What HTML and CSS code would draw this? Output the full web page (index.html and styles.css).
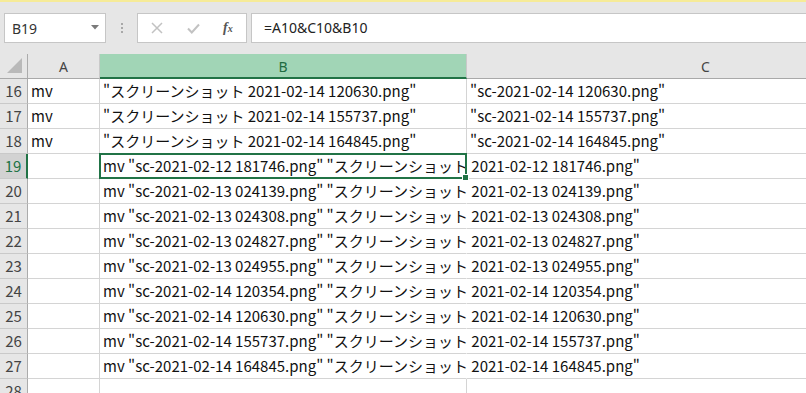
FILE: index.html
```html
<!DOCTYPE html>
<html lang="ja">
<head>
  <meta charset="UTF-8">
  <title>Book1 - Excel</title>
  <link rel="stylesheet" href="styles.css">
</head>
<body>

  <div class="topline"></div>

  <div class="formula-bar">
    <div class="name-box">
      <span>B19</span>
      <svg class="caret" width="8" height="5" viewBox="0 0 8 5"><path d="M0 0H8L4 4.5Z" fill="#7a7a7a"/></svg>
    </div>
    <div class="grip"><i></i><i></i><i></i></div>
    <div class="fx-group">
      <svg class="icon" width="12" height="12" viewBox="0 0 12 12"><path d="M1 1L11 11M11 1L1 11" stroke="#c2c2c2" stroke-width="1.5" fill="none"/></svg>
      <svg class="icon" width="13" height="11" viewBox="0 0 13 11"><path d="M1 5.5L4.8 9.5L12 1.5" stroke="#c2c2c2" stroke-width="2" fill="none"/></svg>
      <span class="fx">f<sub>x</sub></span>
    </div>
    <div class="formula">=A10&amp;C10&amp;B10</div>
  </div>

  <div class="sheet">
    <div class="hd corner"><svg width="17" height="17" viewBox="0 0 17 17"><path d="M16 1V16H1Z" fill="#b9b9b9"/></svg></div>
    <div class="hd">A</div>
    <div class="hd col-sel">B</div>
    <div class="hd">C</div>

    <div class="rh">16</div><div class="c">mv</div><div class="c">"スクリーンショット 2021-02-14 120630.png"</div><div class="c">"sc-2021-02-14 120630.png"</div>
    <div class="rh">17</div><div class="c">mv</div><div class="c">"スクリーンショット 2021-02-14 155737.png"</div><div class="c">"sc-2021-02-14 155737.png"</div>
    <div class="rh">18</div><div class="c">mv</div><div class="c">"スクリーンショット 2021-02-14 164845.png"</div><div class="c">"sc-2021-02-14 164845.png"</div>
    <div class="rh row-sel">19</div><div class="c"></div><div class="c spill active">mv "sc-2021-02-12 181746.png" "スクリーンショット 2021-02-12 181746.png"</div><div class="c"></div>
    <div class="rh">20</div><div class="c"></div><div class="c spill">mv "sc-2021-02-13 024139.png" "スクリーンショット 2021-02-13 024139.png"</div><div class="c"></div>
    <div class="rh">21</div><div class="c"></div><div class="c spill">mv "sc-2021-02-13 024308.png" "スクリーンショット 2021-02-13 024308.png"</div><div class="c"></div>
    <div class="rh">22</div><div class="c"></div><div class="c spill">mv "sc-2021-02-13 024827.png" "スクリーンショット 2021-02-13 024827.png"</div><div class="c"></div>
    <div class="rh">23</div><div class="c"></div><div class="c spill">mv "sc-2021-02-13 024955.png" "スクリーンショット 2021-02-13 024955.png"</div><div class="c"></div>
    <div class="rh">24</div><div class="c"></div><div class="c spill">mv "sc-2021-02-14 120354.png" "スクリーンショット 2021-02-14 120354.png"</div><div class="c"></div>
    <div class="rh">25</div><div class="c"></div><div class="c spill">mv "sc-2021-02-14 120630.png" "スクリーンショット 2021-02-14 120630.png"</div><div class="c"></div>
    <div class="rh">26</div><div class="c"></div><div class="c spill">mv "sc-2021-02-14 155737.png" "スクリーンショット 2021-02-14 155737.png"</div><div class="c"></div>
    <div class="rh">27</div><div class="c"></div><div class="c spill">mv "sc-2021-02-14 164845.png" "スクリーンショット 2021-02-14 164845.png"</div><div class="c"></div>
    <div class="rh">28</div><div class="c"></div><div class="c"></div><div class="c"></div>
  </div>

</body>
</html>
```

FILE: styles.css
```css
body {
  margin: 0;
  width: 806px;
  height: 393px;
  overflow: hidden;
  background: #fff;
  font-family: "Noto Sans CJK JP", "Noto Sans", sans-serif;
  color: #222;
}

.topline {
  height: 2px;
  background: #f6eb98;
}

.formula-bar {
  display: flex;
  align-items: center;
  height: 52px;
  background: #e6e6e6;
  padding-left: 4px;
  box-sizing: border-box;
}

.name-box {
  display: flex;
  align-items: center;
  justify-content: space-between;
  width: 102px;
  height: 30px;
  box-sizing: border-box;
  border: 1px solid #c6c6c6;
  background: #fff;
  padding: 0 6px 0 7px;
  font-family: "Noto Sans", sans-serif;
  font-size: 14px;
  color: #333;
}

.caret {
  margin-top: -2px;
}

.grip {
  display: flex;
  flex-direction: column;
  gap: 2px;
  width: 31px;
  align-items: center;
}

.grip i {
  display: block;
  width: 2px;
  height: 2px;
  background: #a8a8a8;
}

.fx-group {
  display: flex;
  align-items: center;
  width: 110px;
  height: 30px;
  box-sizing: border-box;
  border: 1px solid #c6c6c6;
  background: #fff;
  padding-left: 13px;
}

.fx-group .icon {
  margin-right: 24px;
}

.fx-group .icon + .icon {
  margin-right: 23px;
}

.fx {
  font-family: "Liberation Serif", serif;
  font-style: italic;
  font-weight: bold;
  font-size: 14px;
  color: #555;
}

.fx sub {
  font-size: 10px;
  vertical-align: 0;
}

.formula {
  flex: 1;
  height: 30px;
  box-sizing: border-box;
  border: 1px solid #c6c6c6;
  border-right: none;
  margin-left: 4px;
  background: #fff;
  padding-left: 12px;
  line-height: 28px;
  font-family: "Noto Sans", sans-serif;
  font-size: 14px;
  color: #222;
}

.sheet {
  display: grid;
  grid-template-columns: 28px 72px 367px 478px;
  grid-auto-rows: 25px;
  width: 945px;
  background: #fff;
}

.hd {
  background: #e6e6e6;
  border-right: 1px solid #c9c9c9;
  border-bottom: 1px solid #a9a9a9;
  box-sizing: border-box;
  text-align: center;
  line-height: 25px;
  font-family: "Noto Sans", sans-serif;
  font-size: 14px;
  color: #444;
}

.corner {
  display: flex;
  align-items: flex-end;
  justify-content: flex-end;
  padding: 0 4px 4px 0;
  border-right-color: #ababab;
}

.col-sel {
  background: #a1d5b6;
  color: #1f6c42;
  border-bottom: 2px solid #217346;
}

.rh {
  background: #e6e6e6;
  border-right: 1px solid #ababab;
  border-bottom: 1px solid #c9c9c9;
  box-sizing: border-box;
  text-align: center;
  line-height: 24px;
  font-size: 15px;
  color: #444;
}

.row-sel {
  background: #d2d2d2;
  color: #217346;
  border-right: 2px solid #217346;
}

.c {
  border-right: 1px solid #d4d4d4;
  border-bottom: 1px solid #d4d4d4;
  box-sizing: border-box;
  padding-left: 3px;
  line-height: 24px;
  font-size: 15px;
  color: #111;
  white-space: nowrap;
  overflow: hidden;
}

.spill {
  overflow: visible;
  border-right-color: transparent;
}

.active {
  position: relative;
}

.active::after {
  content: "";
  position: absolute;
  left: -1px;
  top: -1px;
  right: -1px;
  bottom: -1px;
  border: 2px solid #217346;
}

.active::before {
  content: "";
  position: absolute;
  right: -3px;
  bottom: -3px;
  width: 5px;
  height: 5px;
  background: #217346;
  border: 1px solid #fff;
  z-index: 1;
}
```
